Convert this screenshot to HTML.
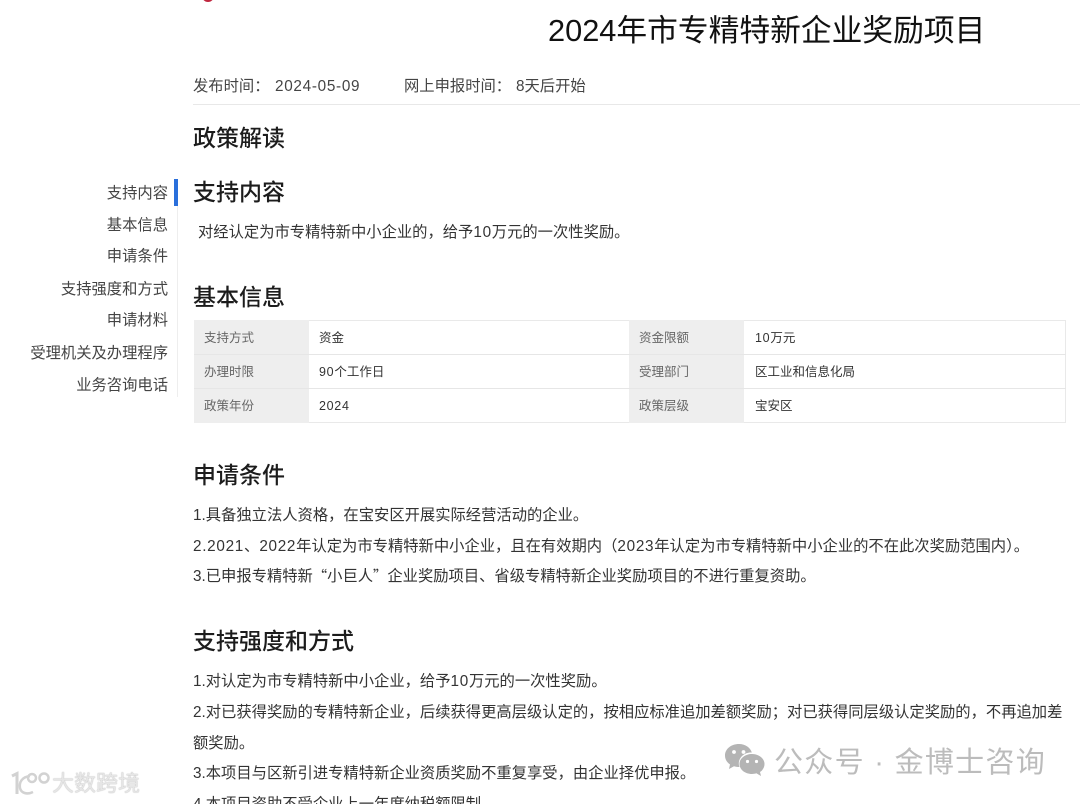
<!DOCTYPE html>
<html lang="zh">
<head>
<meta charset="utf-8">
<style>
html,body{margin:0;padding:0;background:#fff;width:1080px;height:804px;overflow:hidden}
body{position:relative;font-family:"Liberation Sans","Noto Sans CJK SC",sans-serif;color:#333}
.t{position:absolute;white-space:nowrap;line-height:1}
.h{font-size:23px;color:#1c1c1c;left:193px;font-weight:500}
.p{font-size:15.3px;color:#333;left:193px}
.n{font-size:15.3px;color:#444;right:912px;text-align:right}
.c{font-size:12.5px;color:#333}
.l{color:#666}
.b{position:absolute}
.d{letter-spacing:.7px}
.q{font-family:"Noto Sans CJK SC",sans-serif;font-size:14.3px;line-height:0}
</style>
</head>
<body>
<div class="b" style="left:202px;top:-6px;width:12px;height:8px;border-radius:0 0 6px 6px;background:#c0273f"></div>

<div class="t" style="left:548px;top:16px;font-size:30.75px;color:#111">2024年市专精特新企业奖励项目</div>
<div class="t" style="left:193px;top:79px;font-size:15.3px;color:#444">发布时间：</div>
<div class="t d" style="left:275px;top:79px;font-size:15.3px;color:#444">2024-05-09</div>
<div class="t" style="left:404px;top:79px;font-size:15.3px;color:#444">网上申报时间：</div>
<div class="t" style="left:516px;top:79px;font-size:15.3px;color:#444">8天后开始</div>
<div class="b" style="left:193px;top:104px;width:887px;height:1px;background:#e8e8e8"></div>

<div class="t h" style="top:127px">政策解读</div>

<div class="b" style="left:177px;top:179px;width:1px;height:218px;background:#eee"></div>
<div class="b" style="left:174px;top:179px;width:4px;height:27px;background:#2a6fdb"></div>
<div class="t n" style="top:186px">支持内容</div>
<div class="t n" style="top:218px">基本信息</div>
<div class="t n" style="top:249px">申请条件</div>
<div class="t n" style="top:282px">支持强度和方式</div>
<div class="t n" style="top:313px">申请材料</div>
<div class="t n" style="top:346px">受理机关及办理程序</div>
<div class="t n" style="top:378px">业务咨询电话</div>

<div class="t h" style="top:181px">支持内容</div>
<div class="t p" style="left:198px;top:225px">对经认定为市专精特新中小企业的，给予<span class="d">10</span>万元的一次性奖励。</div>

<div class="t h" style="top:286px">基本信息</div>

<div class="b" style="left:194px;top:320px;width:872px;height:103px;box-sizing:border-box;border:1px solid #e9e9e9"></div>
<div class="b" style="left:194px;top:320px;width:115px;height:103px;background:#eee"></div>
<div class="b" style="left:629px;top:320px;width:115px;height:103px;background:#eee"></div>
<div class="b" style="left:194px;top:354px;width:872px;height:1px;background:#e6e6e6"></div>
<div class="b" style="left:194px;top:388px;width:872px;height:1px;background:#e6e6e6"></div>

<div class="t c l" style="left:204px;top:332px">支持方式</div>
<div class="t c" style="left:319px;top:332px">资金</div>
<div class="t c l" style="left:639px;top:332px">资金限额</div>
<div class="t c" style="left:755px;top:332px"><span class="d">10</span>万元</div>
<div class="t c l" style="left:204px;top:366px">办理时限</div>
<div class="t c" style="left:319px;top:366px"><span class="d">90</span>个工作日</div>
<div class="t c l" style="left:639px;top:366px">受理部门</div>
<div class="t c" style="left:755px;top:366px">区工业和信息化局</div>
<div class="t c l" style="left:204px;top:400px">政策年份</div>
<div class="t c d" style="left:319px;top:400px">2024</div>
<div class="t c l" style="left:639px;top:400px">政策层级</div>
<div class="t c" style="left:755px;top:400px">宝安区</div>

<div class="t h" style="top:464px">申请条件</div>
<div class="t p" style="top:508px">1.具备独立法人资格，在宝安区开展实际经营活动的企业。</div>
<div class="t p" style="top:539px"><span class="d">2.2021</span>、<span class="d">2022</span>年认定为市专精特新中小企业，且在有效期内（<span class="d">2023</span>年认定为市专精特新中小企业的不在此次奖励范围内）。</div>
<div class="t p" style="top:569px">3.已申报专精特新<span class="q">“</span>小巨人<span class="q">”</span>企业奖励项目、省级专精特新企业奖励项目的不进行重复资助。</div>

<div class="t h" style="top:630px">支持强度和方式</div>
<div class="t p" style="top:674px">1.对认定为市专精特新中小企业，给予<span class="d">10</span>万元的一次性奖励。</div>
<div class="t p" style="top:705px">2.对已获得奖励的专精特新企业，后续获得更高层级认定的，按相应标准追加差额奖励；对已获得同层级认定奖励的，不再追加差</div>
<div class="t p" style="top:736px">额奖励。</div>
<div class="t p" style="top:766px">3.本项目与区新引进专精特新企业资质奖励不重复享受，由企业择优申报。</div>
<div class="t p" style="top:797px">4.本项目资助不受企业上一年度纳税额限制。</div>

<svg class="b" style="left:724px;top:743px" width="42" height="36" viewBox="0 0 42 36">
<path d="M15 1C7 1 1 6 1 12.500C1 16.500 3.200 19.500 6 21.500L5 26L10 23.200C12 23.800 13.500 24 15.500 24C15 23 14.800 21.500 14.800 20.500C14.800 14 21 9 27.800 9.500C26.500 4.500 21 1 15 1Z" fill="#b4b4b4"/>
<path d="M28 11C21 11 15.500 15.500 15.500 21C15.500 26.500 21 31 28 31C29.500 31 31 30.800 32.300 30.300L37 33L36 29C39 27 40.500 24.200 40.500 21C40.500 15.500 35 11 28 11Z" fill="#b4b4b4"/>
<circle cx="10" cy="9" r="1.900" fill="#fff"/><circle cx="19.500" cy="9" r="1.900" fill="#fff"/>
<circle cx="23.500" cy="18.500" r="1.600" fill="#fff"/><circle cx="32.500" cy="18.500" r="1.600" fill="#fff"/>
</svg>
<div class="t" style="left:774px;top:749px;font-size:29px;letter-spacing:1.300px;color:#bcbcbc">公众号 · 金博士咨询</div>

<svg class="b" style="left:8px;top:770px" width="44" height="30" viewBox="0 0 44 30" fill="none" stroke="#d2d2d2" stroke-width="2.500">
<path d="M4 6L9 3.500V24" stroke-width="3"/>
<path d="M22 6C14 7 11 12 12 18C13 23 19 25 25 22"/>
<circle cx="24" cy="8" r="4"/><circle cx="36" cy="8" r="4.500"/>
</svg>
<div class="t" style="left:52px;top:773px;font-size:22px;color:#e6e6e6;text-shadow:0 0 1px #999">大数跨境</div>
</body>
</html>
